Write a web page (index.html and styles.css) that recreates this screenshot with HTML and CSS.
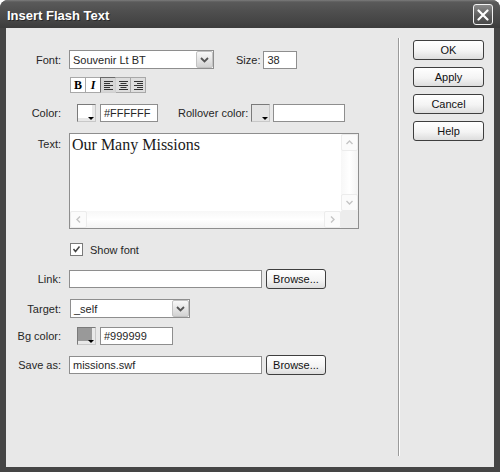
FILE: index.html
```html
<!DOCTYPE html>
<html>
<head>
<meta charset="utf-8">
<title>Insert Flash Text</title>
<link rel="stylesheet" href="styles.css">
</head>
<body>
<div class="window">
  <div class="titlebar">
    <span class="title">Insert Flash Text</span>
    <div class="close">
      <svg width="12" height="12" viewBox="0 0 12 12"><path d="M1.5 1.5 L10.5 10.5 M10.5 1.5 L1.5 10.5" stroke="#fff" stroke-width="2.2" stroke-linecap="round"/></svg>
    </div>
  </div>
  <div class="frame">
    <div class="client">
      <div class="form">
        <div class="row r-font">
          <span class="lbl">Font:</span>
          <div class="select w-font">
            <span class="val">Souvenir Lt BT</span>
            <span class="drop"><svg width="9" height="6" viewBox="0 0 9 6"><path d="M1 1 L4.5 4.5 L8 1" fill="none" stroke="#555" stroke-width="1.8"/></svg></span>
          </div>
          <span class="size-lbl">Size:</span>
          <div class="input w-size">38</div>
        </div>

        <div class="row r-style">
          <span class="lbl"></span>
          <div class="toolgroup">
            <span class="tool light"><span class="bold-b">B</span></span>
            <span class="tool light"><span class="ital-i">I</span></span>
            <span class="tool pressed">
              <svg width="9" height="9" viewBox="0 0 9 9"><path d="M0 0.5H9M0 2.5H6M0 4.5H9M0 6.5H6M0 8.5H9" stroke="#333" stroke-width="1"/></svg>
            </span>
            <span class="tool">
              <svg width="9" height="9" viewBox="0 0 9 9"><path d="M0 0.5H9M1.5 2.5H7.5M0 4.5H9M1.5 6.5H7.5M0 8.5H9" stroke="#333" stroke-width="1"/></svg>
            </span>
            <span class="tool">
              <svg width="9" height="9" viewBox="0 0 9 9"><path d="M0 0.5H9M3 2.5H9M0 4.5H9M3 6.5H9M0 8.5H9" stroke="#333" stroke-width="1"/></svg>
            </span>
          </div>
        </div>

        <div class="row r-color">
          <span class="lbl">Color:</span>
          <div class="swatch sw-white"><span class="tri"></span></div>
          <div class="input w-hex">#FFFFFF</div>
          <span class="roll-lbl">Rollover color:</span>
          <div class="swatch sw-empty"><span class="tri"></span></div>
          <div class="input w-roll"></div>
        </div>

        <div class="row r-text">
          <span class="lbl lbl-top">Text:</span>
          <div class="textarea">
            <div class="ta-text">Our Many Missions</div>
            <div class="vscroll">
              <span class="sbtn"><svg width="7" height="5" viewBox="0 0 7 5"><path d="M0.5 4 L3.5 1 L6.5 4" fill="none" stroke="#c4c4c4" stroke-width="1.4"/></svg></span>
              <span class="strack"></span>
              <span class="sbtn"><svg width="7" height="5" viewBox="0 0 7 5"><path d="M0.5 1 L3.5 4 L6.5 1" fill="none" stroke="#c4c4c4" stroke-width="1.4"/></svg></span>
            </div>
            <div class="hscroll">
              <span class="sbtn"><svg width="5" height="7" viewBox="0 0 5 7"><path d="M4 0.5 L1 3.5 L4 6.5" fill="none" stroke="#c4c4c4" stroke-width="1.4"/></svg></span>
              <span class="strack"></span>
              <span class="sbtn"><svg width="5" height="7" viewBox="0 0 5 7"><path d="M1 0.5 L4 3.5 L1 6.5" fill="none" stroke="#c4c4c4" stroke-width="1.4"/></svg></span>
            </div>
            <div class="corner"></div>
          </div>
        </div>

        <div class="row r-check">
          <span class="lbl"></span>
          <span class="checkbox"><svg width="11" height="11" viewBox="0 0 11 11"><path d="M2.5 5 L4.5 7.5 L8.5 2.5" fill="none" stroke="#444" stroke-width="1.5"/></svg></span>
          <span class="check-lbl">Show font</span>
        </div>

        <div class="row r-link">
          <span class="lbl">Link:</span>
          <div class="input w-path"></div>
          <div class="btn btn-browse">Browse...</div>
        </div>

        <div class="row r-target">
          <span class="lbl">Target:</span>
          <div class="select w-target">
            <span class="val">_self</span>
            <span class="drop"><svg width="9" height="6" viewBox="0 0 9 6"><path d="M1 1 L4.5 4.5 L8 1" fill="none" stroke="#555" stroke-width="1.8"/></svg></span>
          </div>
        </div>

        <div class="row r-bg">
          <span class="lbl">Bg color:</span>
          <div class="swatch sw-gray"><span class="tri"></span></div>
          <div class="input w-bghex">#999999</div>
        </div>

        <div class="row r-save">
          <span class="lbl">Save as:</span>
          <div class="input w-path">missions.swf</div>
          <div class="btn btn-browse">Browse...</div>
        </div>
      </div>

      <div class="divider"></div>

      <div class="side">
        <div class="btn btn-main">OK</div>
        <div class="btn btn-main">Apply</div>
        <div class="btn btn-main">Cancel</div>
        <div class="btn btn-main">Help</div>
      </div>
    </div>
  </div>
</div>
</body>
</html>
```

FILE: styles.css
```css
html, body {
  margin: 0;
  padding: 0;
  background: #ffffff;
}

body {
  font-family: "Liberation Sans", Arial, sans-serif;
  font-size: 11px;
  color: #262626;
}

.window {
  width: 500px;
  height: 472px;
  display: flex;
  flex-direction: column;
  background: #474747;
  border-radius: 8px 8px 0 0;
  overflow: hidden;
}

.titlebar {
  height: 28px;
  flex: none;
  display: flex;
  justify-content: space-between;
  align-items: flex-start;
  background: linear-gradient(#7c7c7c 0px, #5a5a5a 2px, #4e4e4e 12px, #444444 22px, #3c3c3c 28px);
}

.title {
  padding: 3px 0 0 7px;
  line-height: 25px;
  font-size: 13px;
  font-weight: bold;
  color: #ffffff;
  text-shadow: 1px 1px 0 #2a2a2a;
}

.close {
  width: 20px;
  height: 21px;
  box-sizing: border-box;
  margin: 4px 7px 0 0;
  border: 1px solid #f2f2f2;
  border-radius: 3px;
  background: linear-gradient(#8a8a8a, #5a5a5a 60%, #4a4a4a);
  display: flex;
  align-items: center;
  justify-content: center;
}

.frame {
  flex: 1;
  display: flex;
  padding: 0 6px 5px 6px;
  background: #454545;
}

.client {
  flex: 1;
  display: flex;
  background: #e8e8e8;
  padding: 10px 0 11px 0;
}

.form {
  width: 392px;
  flex: none;
  padding-top: 12px;
  display: flex;
  flex-direction: column;
}

.row {
  display: flex;
  align-items: center;
}

.lbl {
  width: 55px;
  margin-right: 8px;
  text-align: right;
  flex: none;
  white-space: nowrap;
}

.lbl-top {
  align-self: flex-start;
  padding-top: 5px;
}

.r-font { height: 19px; }
.r-style { height: 16px; margin-top: 8px; }
.r-color { height: 18px; margin-top: 11px; }
.r-text { margin-top: 11px; align-items: flex-start; }
.r-check { height: 13px; margin-top: 14px; }
.r-link { height: 20px; margin-top: 13px; }
.r-target { height: 19px; margin-top: 10px; }
.r-bg { height: 18px; margin-top: 9px; }
.r-save { height: 20px; margin-top: 10px; }

/* select */
.select {
  height: 19px;
  box-sizing: border-box;
  border: 1px solid #8e8e8e;
  background: #ffffff;
  display: flex;
  align-items: center;
}
.val {
  flex: 1;
  padding-left: 3px;
  white-space: nowrap;
}
.drop {
  width: 17px;
  height: 17px;
  box-sizing: border-box;
  border: 1px solid #c2c2c2;
  border-radius: 2px;
  background: linear-gradient(#f8f8f8, #e2e2e2 60%, #d2d2d2);
  display: flex;
  align-items: center;
  justify-content: center;
}
.w-font { width: 145px; }
.w-target { width: 120px; margin-left: 1px; }

/* inputs */
.input {
  height: 18px;
  box-sizing: border-box;
  border: 1px solid #8e8e8e;
  background: #ffffff;
  padding-left: 3px;
  line-height: 16px;
  white-space: nowrap;
}
.w-size { width: 34px; }
.w-hex { width: 58px; margin-left: 4px; }
.w-roll { width: 72px; margin-left: 3px; }
.w-path { width: 193px; }
.w-bghex { width: 73px; margin-left: 4px; }

.size-lbl {
  margin-left: 22px;
  margin-right: 3px;
  white-space: nowrap;
}

.roll-lbl {
  margin-left: 20px;
  width: 70px;
  margin-right: 3px;
  white-space: nowrap;
}

/* toolbar */
.toolgroup {
  display: flex;
  margin-left: 1px;
}
.tool {
  width: 16px;
  height: 16px;
  box-sizing: border-box;
  border: 1px solid #a8a8a8;
  margin-right: -1px;
  background: #dedede;
  display: flex;
  align-items: center;
  justify-content: center;
}
.tool.light {
  background: #ffffff;
}
.tool.pressed {
  border-color: #6a6a6a #cfcfcf #cfcfcf #6a6a6a;
  background: #d6d6d6;
  position: relative;
  z-index: 1;
}
.bold-b {
  font-family: "Liberation Serif", "Times New Roman", serif;
  font-weight: bold;
  font-size: 12px;
  line-height: 12px;
  color: #000;
}
.ital-i {
  font-family: "Liberation Serif", "Times New Roman", serif;
  font-weight: bold;
  font-style: italic;
  font-size: 12px;
  line-height: 12px;
  color: #000;
}

/* swatches */
.swatch {
  width: 19px;
  height: 18px;
  box-sizing: border-box;
  border: 1px solid;
  border-color: #7a7a7a #c8c8c8 #c8c8c8 #7a7a7a;
  position: relative;
  flex: none;
}
.r-color > .sw-white,
.r-bg > .sw-gray {
  margin-left: 8px;
}
.sw-white { background: #ffffff; box-shadow: inset -3px -3px 0 #e8e8e8; }
.sw-empty { background: #e4e4e4; }
.sw-gray { background: #999999; box-shadow: inset -3px -3px 0 #e8e8e8; }
.tri {
  position: absolute;
  right: 1px;
  bottom: 1px;
  width: 0;
  height: 0;
  border-left: 3px solid transparent;
  border-right: 3px solid transparent;
  border-top: 3px solid #000;
}

/* textarea */
.textarea {
  width: 290px;
  height: 96px;
  box-sizing: border-box;
  border: 1px solid #8e8e8e;
  background: #ffffff;
  display: grid;
  grid-template-columns: 1fr 17px;
  grid-template-rows: 1fr 17px;
}
.ta-text {
  font-family: "Liberation Serif", "Times New Roman", serif;
  font-size: 16px;
  line-height: 20px;
  padding: 1px 2px;
  color: #1a1a1a;
}
.vscroll {
  display: flex;
  flex-direction: column;
  background: linear-gradient(90deg, #f7f7f7, #ffffff 50%, #f3f3f3);
}
.hscroll {
  display: flex;
  background: linear-gradient(#f7f7f7, #ffffff 50%, #f3f3f3);
}
.strack { flex: 1; }
.sbtn {
  width: 17px;
  height: 17px;
  box-sizing: border-box;
  border: 1px solid #ececec;
  border-radius: 2px;
  background: #fbfbfb;
  display: flex;
  align-items: center;
  justify-content: center;
  flex: none;
}
.corner {
  background: #ececec;
}

/* checkbox */
.checkbox {
  width: 13px;
  height: 13px;
  box-sizing: border-box;
  border: 1px solid #7a7a7a;
  background: #ffffff;
  margin-left: 1px;
  display: flex;
  align-items: center;
  justify-content: center;
}
.check-lbl {
  margin-left: 7px;
}

/* buttons */
.btn {
  height: 20px;
  box-sizing: border-box;
  border: 1px solid #3e3e3e;
  border-radius: 3px;
  background: linear-gradient(#ffffff, #f4f4f4 55%, #dddddd);
  display: flex;
  align-items: center;
  justify-content: center;
  color: #111;
  white-space: nowrap;
}
.btn-browse {
  width: 60px;
  margin-left: 4px;
}
.btn-main {
  width: 71px;
}

.divider {
  width: 1px;
  flex: none;
  background: #9a9a9a;
  box-shadow: 1px 0 0 #ffffff;
}

.side {
  padding: 2px 0 0 14px;
  display: flex;
  flex-direction: column;
  gap: 7px;
}
```
